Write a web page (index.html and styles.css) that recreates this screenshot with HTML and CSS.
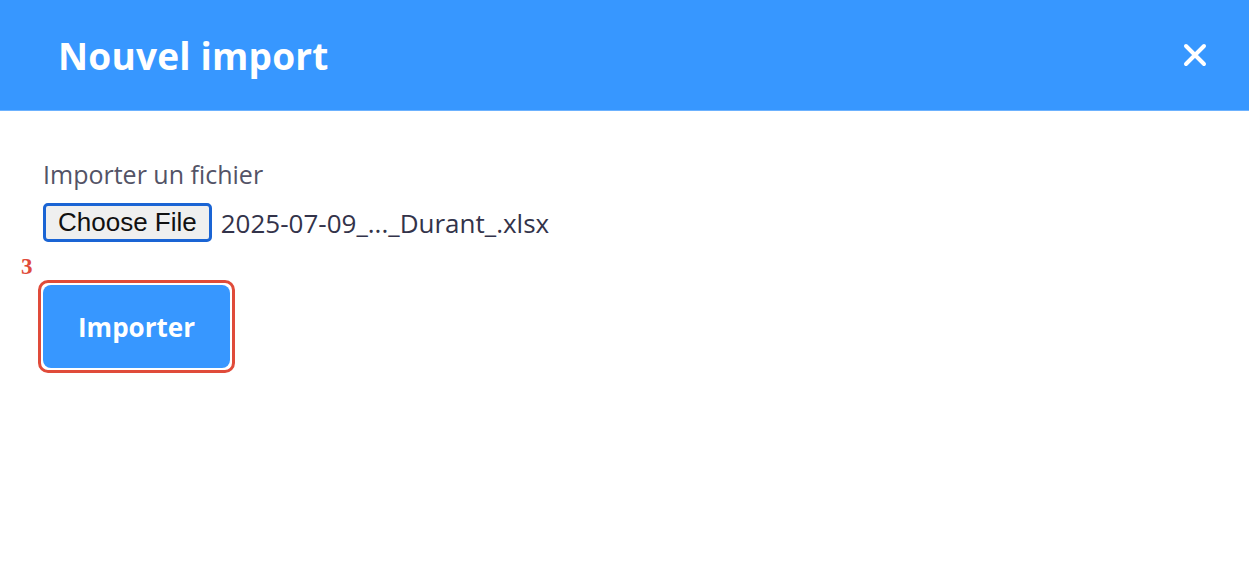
FILE: index.html
```html
<!DOCTYPE html>
<html lang="fr">
<head>
    <meta charset="UTF-8">
    <meta name="viewport" content="width=device-width, initial-scale=1.0">
    <title>Nouvel import</title>
    <link rel="stylesheet" href="styles.css">
</head>
<body>
    <div class="modal">
        <div class="modal-header">
            <h1>Nouvel import</h1>
            <button class="close" aria-label="Fermer">
                <svg width="24" height="24" viewBox="0 0 24 24">
                    <path d="M3 3 L21 21 M21 3 L3 21" stroke="#fff" stroke-width="4" stroke-linecap="round"/>
                </svg>
            </button>
        </div>

        <div class="modal-body">
            <label class="field-label">Importer un fichier</label>
            <div class="file-row">
                <span class="file-btn">Choose File</span>
                <span class="file-name">2025-07-09_..._Durant_.xlsx</span>
            </div>

            <div class="submit-wrap">
                <span class="marker">3</span>
                <div class="highlight-box">
                    <button class="submit">Importer</button>
                </div>
            </div>
        </div>
    </div>
</body>
</html>
```

FILE: styles.css
```css
* {
    margin: 0;
    padding: 0;
    box-sizing: border-box;
}
body {
    font-family: "Open Sans", "Noto Sans", sans-serif;
    background: #fff;
    color: #3d3d4e;
}
.modal-header {
    height: 111px;
    background: #3797ff;
    border-bottom: 1px solid #6cb2ff;
    display: flex;
    align-items: center;
    justify-content: space-between;
    padding: 0 42px 0 58px;
}
.modal-header h1 {
    color: #fff;
    font-size: 37px;
    font-weight: 700;
    letter-spacing: 0.2px;
}
.close {
    background: none;
    border: none;
    width: 24px;
    height: 24px;
    display: flex;
}
.modal-body {
    padding: 47px 0 0 43px;
}
.field-label {
    display: block;
    font-size: 25px;
    color: #535366;
    line-height: 32px;
}
.file-row {
    display: flex;
    align-items: center;
    gap: 9px;
    margin-top: 13px;
}
.file-btn {
    font-family: "Liberation Sans", Arial, sans-serif;
    font-size: 26px;
    color: #111;
    background: #efefef;
    border: 3px solid #1a64d4;
    border-radius: 5px;
    height: 39px;
    padding: 0 12px;
    display: flex;
    align-items: center;
}
.file-name {
    font-size: 26px;
    color: #33334a;
}
.submit-wrap {
    position: relative;
    margin-top: 38px;
    margin-left: -5px;
}
.marker {
    position: absolute;
    left: -17px;
    top: -26px;
    font-family: "Liberation Serif", serif;
    font-weight: 700;
    font-size: 23px;
    color: #e04b3a;
}
.highlight-box {
    display: inline-block;
    border: 3px solid #e04b3a;
    border-radius: 10px;
    padding: 2px;
}
.submit {
    display: block;
    width: 187px;
    height: 83px;
    background: #3797ff;
    border: none;
    border-radius: 8px;
    color: #fff;
    font-family: "Open Sans", "Noto Sans", sans-serif;
    font-size: 26px;
    font-weight: 700;
}
```
